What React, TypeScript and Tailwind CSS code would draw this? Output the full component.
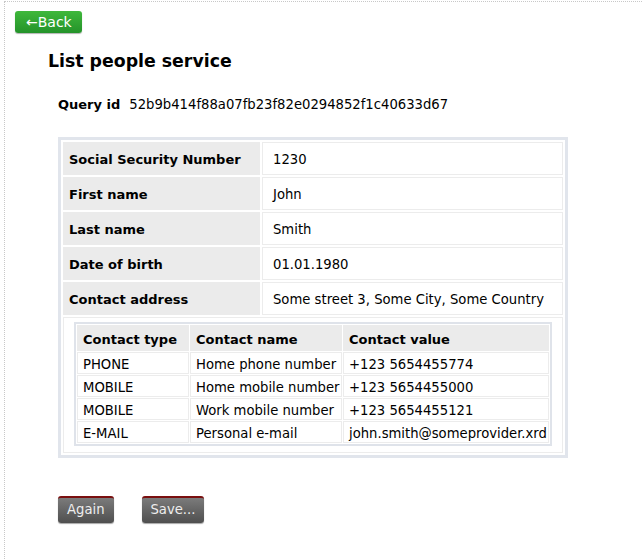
import React from "react";

const rows: [string, string][] = [
  ["Social Security Number", "1230"],
  ["First name", "John"],
  ["Last name", "Smith"],
  ["Date of birth", "01.01.1980"],
  ["Contact address", "Some street 3, Some City, Some Country"],
];

const contacts: [string, string, string][] = [
  ["PHONE", "Home phone number", "+123 5654455774"],
  ["MOBILE", "Home mobile number", "+123 5654455000"],
  ["MOBILE", "Work mobile number", "+123 5654455121"],
  ["E-MAIL", "Personal e-mail", "john.smith@someprovider.xrd"],
];

export default function App() {
  return (
    <div className="min-h-[559px] bg-white font-['DejaVu_Sans',sans-serif] text-[13.2px] text-black">
      <div className="ml-[4px] mt-[1px] min-h-[558px] border-l border-t border-dotted border-[#c8c8c8] pl-[10px] pt-[9px]">
        <button className="flex h-[22px] w-[67px] items-center rounded-[3px] bg-gradient-to-b from-[#3fb83b] to-[#24932a] pl-[11px] text-[14px] leading-none text-white shadow-[0_1px_1px_rgba(0,0,0,0.3)]">
          ←Back
        </button>
        <div className="pl-[33px]">
          <h1 className="mt-[17px] text-[17.33px] font-bold leading-[22px]">List people service</h1>
          <div className="mt-[23px] flex items-center pl-[10px]">
            <span className="text-[13px] font-bold">Query id</span>
            <span className="ml-[9px]">52b9b414f88a07fb23f82e0294852f1c40633d67</span>
          </div>
          <table className="ml-[10px] mt-[22px] w-[510px] border-separate border-[3px] border-[#e1e5ec] [border-spacing:2px]">
            <tbody>
              {rows.map(([k, v]) => (
                <tr key={k}>
                  <td className="h-[33px] w-[197px] border border-[#ebebeb] bg-[#ebebeb] pl-[5px] pt-[3px] text-[13px] font-bold">{k}</td>
                  <td className="h-[33px] border border-[#ececec] pl-[10px] pt-[3px]">{v}</td>
                </tr>
              ))}
              <tr>
                <td colSpan={2} className="border border-[#ececec] px-[10px] pb-[6px] pt-[4px]">
                  <table className="w-full whitespace-nowrap border-separate border-2 border-[#dfe3ea] [border-spacing:1px]">
                    <tbody>
                      <tr>
                        <th className="h-[26px] w-[112px] border border-[#ebebeb] bg-[#ebebeb] pl-[5px] pt-[3px] text-left text-[13px] font-bold">Contact type</th>
                        <th className="h-[26px] w-[152px] border border-[#ebebeb] bg-[#ebebeb] pl-[5px] pt-[3px] text-left text-[13px] font-bold">Contact name</th>
                        <th className="h-[26px] border border-[#ebebeb] bg-[#ebebeb] pl-[5px] pt-[3px] text-left text-[13px] font-bold">Contact value</th>
                      </tr>
                      {contacts.map(([a, b, c], i) => (
                        <tr key={i}>
                          <td className="h-[22px] border border-[#ececec] pl-[5px] pt-[3px] leading-[17px]">{a}</td>
                          <td className="h-[22px] border border-[#ececec] pl-[5px] pt-[3px] leading-[17px]">{b}</td>
                          <td className="h-[22px] border border-[#ececec] pl-[5px] pt-[3px] leading-[17px]">{c}</td>
                        </tr>
                      ))}
                    </tbody>
                  </table>
                </td>
              </tr>
            </tbody>
          </table>
          <div className="mt-[38px] flex gap-[28px] pl-[10px]">
            <button className="h-[27px] rounded-[3px] border-t-2 border-[#7a0f0f] bg-gradient-to-b from-[#7b7b7b] to-[#4f4f4f] px-[9px] text-[13.2px] text-[#eeeeee] shadow-[0_1px_1px_rgba(0,0,0,0.35)]">
              Again
            </button>
            <button className="h-[27px] rounded-[3px] border-t-2 border-[#7a0f0f] bg-gradient-to-b from-[#7b7b7b] to-[#4f4f4f] px-[9px] text-[13.2px] text-[#eeeeee] shadow-[0_1px_1px_rgba(0,0,0,0.35)]">
              Save...
            </button>
          </div>
        </div>
      </div>
    </div>
  );
}
